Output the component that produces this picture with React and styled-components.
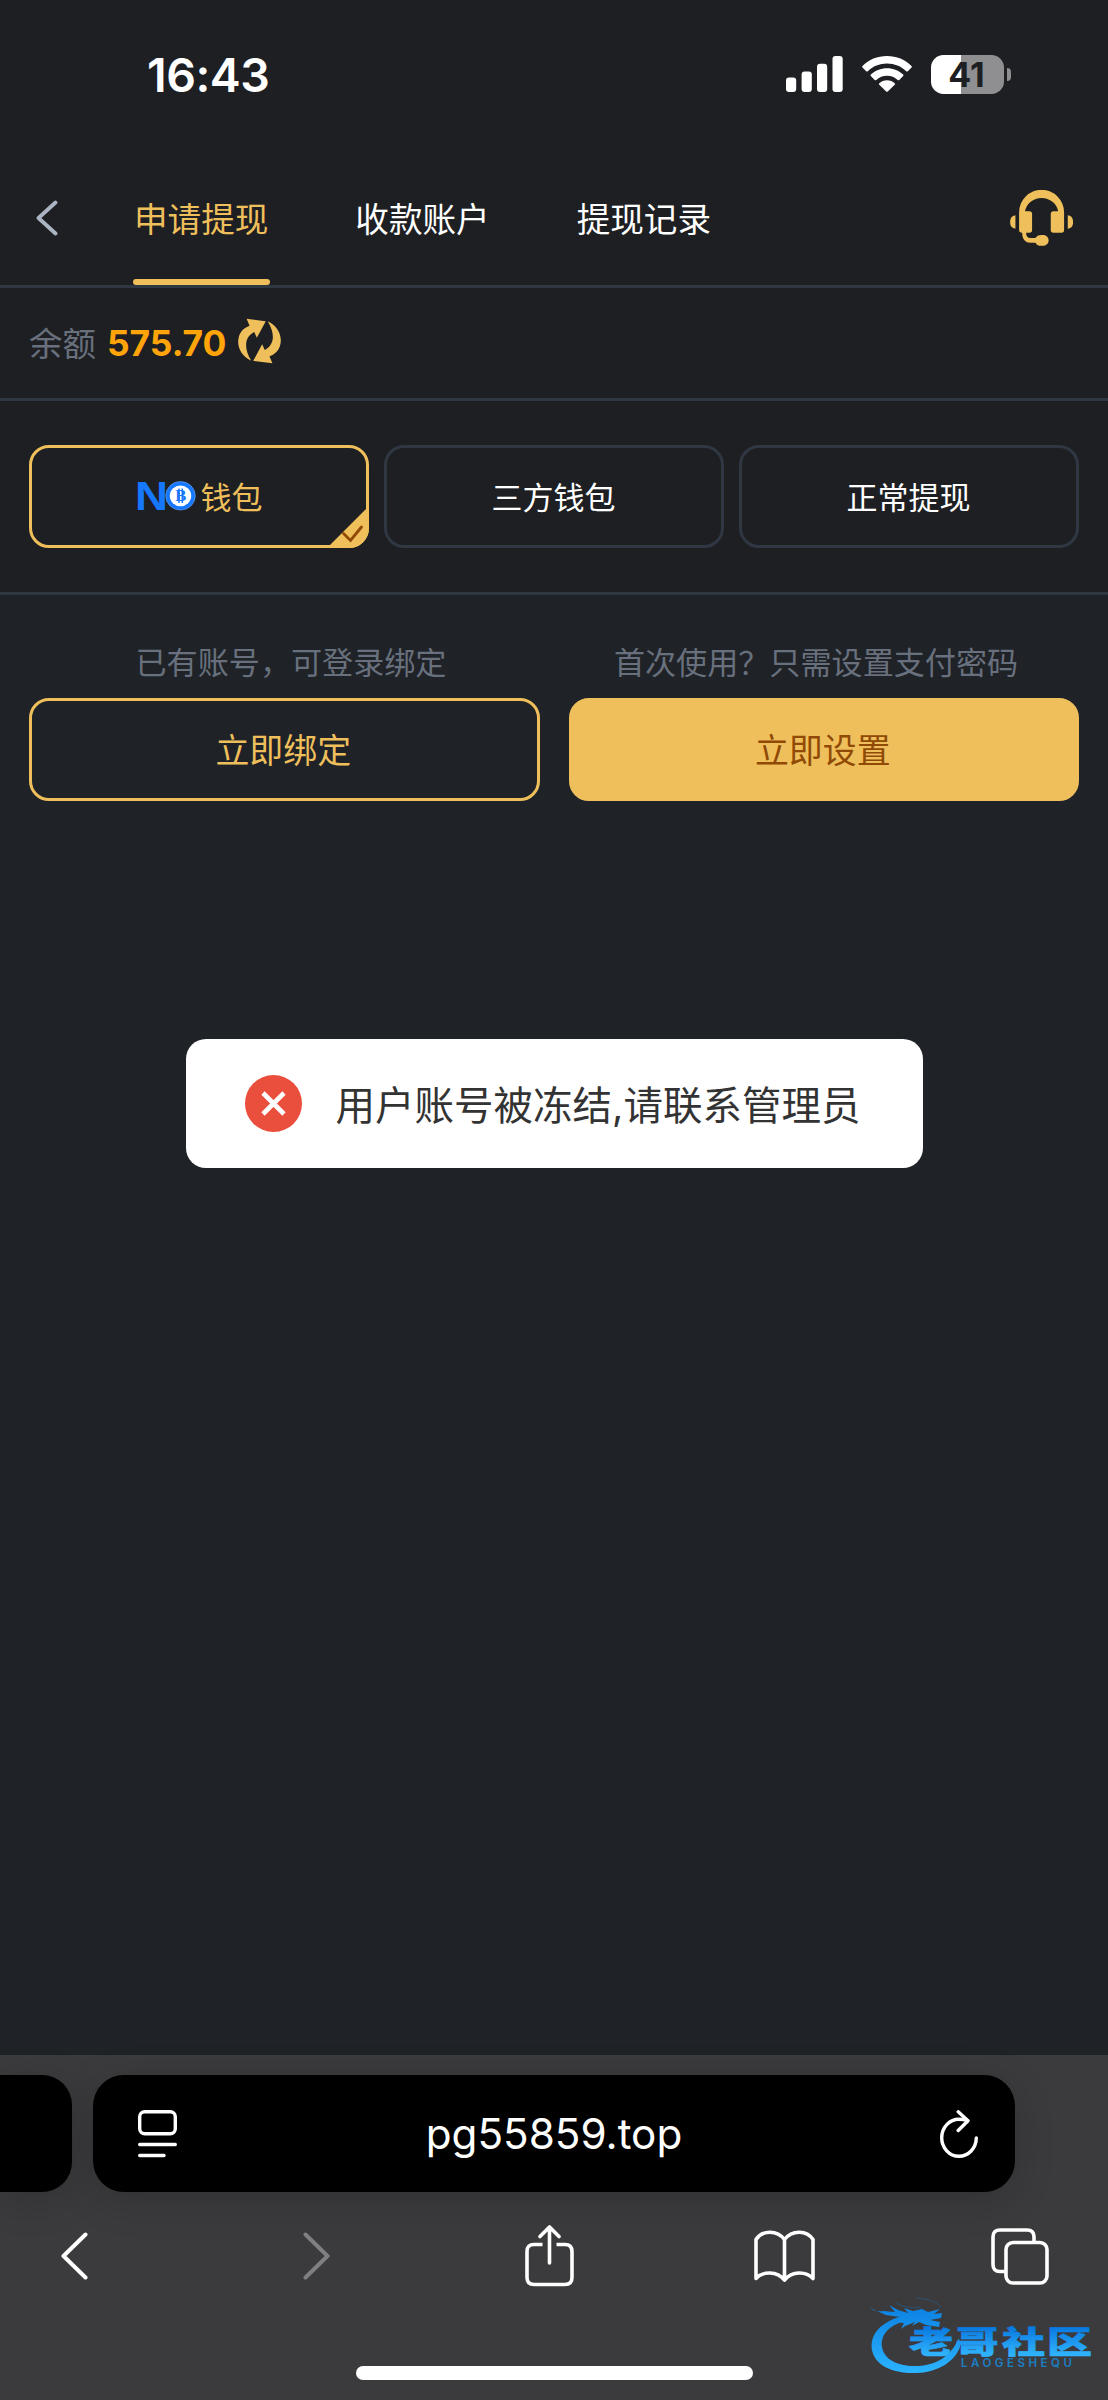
import React from 'react'
import styled, { createGlobalStyle } from 'styled-components'

const tabs = ['申请提现', '收款账户', '提现记录'];

function SignalIcon() {
  return (
    <svg width="57" height="36" viewBox="0 0 57 36" fill="#fff">
      <rect x="0" y="21.5" width="10.2" height="14.5" rx="3" />
      <rect x="15.6" y="15.5" width="10.2" height="20.5" rx="3" />
      <rect x="31" y="7.7" width="10.2" height="28.3" rx="3" />
      <rect x="46.5" y="0" width="10.2" height="36" rx="3" />
    </svg>
  )
}

function WifiIcon() {
  return (
    <svg width="50" height="36" viewBox="0 0 50 36" fill="#fff">
      <path d="M25 0C34.6 0 43.3 3.7 49.5 9.9Q50.2 10.7 49.5 11.5L45.8 15.2Q45 15.9 44.2 15.2C39.2 10.4 32.4 7.6 25 7.6S10.8 10.4 5.8 15.2Q5 15.9 4.2 15.2L.5 11.5Q-.2 10.7 .5 9.9C6.7 3.7 15.4 0 25 0Z" />
      <path d="M25 12.2C31.3 12.2 37 14.6 41.2 18.5Q41.9 19.3 41.2 20.1L37.3 23.9Q36.5 24.6 35.7 23.9C32.9 21.3 29.1 19.7 25 19.7S17.1 21.3 14.3 23.9Q13.5 24.6 12.7 23.9L8.8 20.1Q8.1 19.3 8.8 18.5C13 14.6 18.7 12.2 25 12.2Z" />
      <path d="M25 24.3C28 24.3 30.7 25.4 32.7 27.2Q33.5 28 32.7 28.8L25.8 35.5Q25 36.2 24.2 35.5L17.3 28.8Q16.5 28 17.3 27.2C19.3 25.4 22 24.3 25 24.3Z" />
    </svg>
  )
}

function HeadsetIcon() {
  return (
    <svg width="63.5" height="56" viewBox="810 480 190 168" fill="#eebf5b">
      <path d="M837 552V547A67.5 67.5 0 0 1 972 547V600Q972 608 964 608H940Q932 608 932 600V552Q932 544 940 544H954A50 47 0 0 0 855 544H868Q876 544 876 552V600Q876 608 868 608H858Q858 624 872 624H886Q892 615 903 615H911A16 16.3 0 0 1 911 647.5H903Q892 647.5 886 638H872Q846 638 846 608Q837 608 837 600Z" />
      <path d="M826 556V596Q810 594 810 576T826 556Z" />
      <path d="M983 556V596Q999 594 999 576T983 556Z" />
    </svg>
  )
}

function RefreshIcon() {
  const arrow = 'M93 181C59 165 48 132 56 107C61 92 70 82 88 75L79 54L137 61L110 111L102 94C78 106 66 135 93 181Z';
  return (
    <svg width="43" height="46" viewBox="53 52 130 138" fill="#eebf5b">
      <path d={arrow} />
      <path transform="rotate(180 118 121)" d={arrow} />
    </svg>
  )
}

function NoLogo() {
  return (
    <svg width="62" height="52" viewBox="0 -10 62 52">
      <text x="0" y="29.8" fontFamily="Liberation Sans" fontWeight="700" fontSize="40" fill="#1677ff" textLength="33" lengthAdjust="spacingAndGlyphs">N</text>
      <ellipse cx="45.5" cy="15.8" rx="14.8" ry="14.3" fill="#1677ff" stroke="#6ea8ef" strokeWidth=".6" />
      <ellipse cx="45.5" cy="15.8" rx="10.7" ry="10.4" fill="#fff" />
      <path d="M44 8.5V23M47.3 8.5V23" stroke="#1677ff" strokeWidth="1.5" />
      <text x="45.8" y="21.3" textAnchor="middle" fontFamily="Liberation Serif" fontWeight="700" fontSize="16.5" fill="#1677ff">B</text>
    </svg>
  )
}

function ShareIcon() {
  return (
    <svg width="49" height="62" viewBox="0 0 49 62" fill="none" stroke="#fff" strokeWidth="3.6">
      <path d="M17.5 19.5H9Q2 19.5 2 26.5V52.5Q2 59.5 9 59.5H40Q47 59.5 47 52.5V26.5Q47 19.5 40 19.5H31.5" />
      <path d="M24.5 38V3M15 11.5L24.5 2L34 11.5" strokeLinecap="round" strokeLinejoin="round" />
    </svg>
  )
}

function BookIcon() {
  return (
    <svg width="61" height="52" viewBox="0 0 61 52" fill="none" stroke="#fff" strokeWidth="3.6" strokeLinecap="round" strokeLinejoin="round">
      <path d="M30.5 9.5C23 -.5 8 0 2 9.5V48.5C9 41 23 41 30.5 50C38 41 52 41 59 48.5V9.5C53 0 38 -.5 30.5 9.5ZM30.5 9.5V49" />
    </svg>
  )
}

function TabsIcon() {
  return (
    <svg width="58" height="57" viewBox="0 0 58 57" fill="none" stroke="#fff" strokeWidth="3.6">
      <path d="M14 43.5H9Q2 43.5 2 36.5V9Q2 2 9 2H36Q43 2 43 9V13.5" />
      <rect x="15" y="14.5" width="41" height="40.5" rx="7" />
    </svg>
  )
}

function Watermark() {
  return (
    <svg width="226" height="82" viewBox="0 0 226 82">
      <defs>
        <linearGradient id="ring" gradientUnits="userSpaceOnUse" x1="0" y1="8" x2="0" y2="80">
          <stop offset="0" stopColor="#0a7ee0" />
          <stop offset="1" stopColor="#2bb4ff" />
        </linearGradient>
        <linearGradient id="word" gradientUnits="userSpaceOnUse" x1="0" y1="33" x2="0" y2="60">
          <stop offset="0" stopColor="#0878e0" />
          <stop offset="1" stopColor="#2fb2fb" />
        </linearGradient>
      </defs>
      <g fill="url(#ring)">
        <path d="M29 23C8 30 0 42 2 56C5 72 24 80 47 79C69 78 85 67 90 53L89 44C81 62 67 71 48 72C29 73 14 66 12 53C10 40 21 29 40 26Z" />
        <path d="M0 14Q5 18 13 17L25 18L19 11L28 16L38 19L34 14L43 17L52 15L58 18L70 15L64 20L72 19L71 24L60 26L70 28L69 33L56 31L49 28L42 32L45 28L35 32L31 35L34 29L24 28L30 23L16 21Z" />
      </g>
      <path d="M26 9Q36 15 51 13M46 4Q65 5 72 14" fill="none" stroke="#29557a" strokeWidth=".8" />
      <g fontFamily="Noto Sans CJK SC" fontWeight="900" fontSize="31" fill="url(#word)" stroke="url(#word)" strokeWidth=".7">
        <text x="39" y="59" textLength="44" lengthAdjust="spacingAndGlyphs">老</text>
        <text x="85.5" y="59" textLength="43" lengthAdjust="spacingAndGlyphs">哥</text>
        <text x="132" y="59" textLength="43" lengthAdjust="spacingAndGlyphs">社</text>
        <text x="177" y="59" textLength="45" lengthAdjust="spacingAndGlyphs">区</text>
      </g>
      <text x="91" y="73" fontFamily="Inter" fontWeight="600" fontSize="11.5" fill="#1b7fc4" textLength="111">LAOGESHEQU</text>
    </svg>
  )
}

function App() {
  return (
    <Container>
      <GlobalStyle />
      <StatusBar>
        <Clock>16:43</Clock>
        <StatusIcons>
          <SignalIcon />
          <WifiIcon />
          <Battery><BatteryBody>41</BatteryBody><BatteryTip /></Battery>
        </StatusIcons>
      </StatusBar>

      <Header>
        <svg width="22" height="36" viewBox="0 0 22 36" fill="none" stroke="#abb4c3" strokeWidth="3.8" strokeLinecap="round" strokeLinejoin="round">
          <path d="M19.5 2.5L2.5 18L19.5 33.5" />
        </svg>
        <TabList>
          {tabs.map((tab, i) => <Tab key={tab} $active={i === 0}>{tab}</Tab>)}
        </TabList>
        <HeadsetIcon />
      </Header>

      <BalanceRow>
        <BalanceLabel>余额</BalanceLabel>
        <Balance>575.70</Balance>
        <RefreshIcon />
      </BalanceRow>

      <WalletRow>
        <Wallet $active>
          <NoLogo />钱包
          <Corner>
            <svg width="42" height="42" viewBox="0 0 42 42">
              <path d="M42 0V22A20 20 0 0 1 22 42H0Z" fill="#eebf5b" />
              <path d="M16.5 27.5L23.5 34.5L34.5 21" fill="none" stroke="#904a06" strokeWidth="2.8" strokeLinecap="round" />
            </svg>
          </Corner>
        </Wallet>
        <Wallet>三方钱包</Wallet>
        <Wallet>正常提现</Wallet>
      </WalletRow>

      <Main>
        <HintRow>
          <Hint>已有账号，可登录绑定</Hint>
          <Hint>首次使用？只需设置支付密码</Hint>
        </HintRow>
        <ButtonRow>
          <Button>立即绑定</Button>
          <Button $filled>立即设置</Button>
        </ButtonRow>
        <Toast>
          <svg width="57" height="57" viewBox="0 0 57 57">
            <circle cx="28.5" cy="28.5" r="28.5" fill="#ea4f3d" />
            <path d="M18 18L39 39M39 18L18 39" stroke="#fff" strokeWidth="4.6" />
          </svg>
          <ToastText>用户账号被冻结,请联系管理员</ToastText>
        </Toast>
      </Main>

      <Browser>
        <AddressRow>
          <PrevPage />
          <AddressBar>
            <svg width="39" height="48" viewBox="0 0 39 48" fill="none" stroke="#fff" strokeWidth="3.4" strokeLinecap="round">
              <rect x="1.7" y="1.7" width="35.6" height="22" rx="5" />
              <path d="M1.7 34.5H37.3M1.7 45.5H26" />
            </svg>
            <Url>pg55859.top</Url>
            <svg width="38" height="48" viewBox="0 0 38 48" fill="none" stroke="#fff" strokeWidth="3.4" strokeLinecap="round" strokeLinejoin="round">
              <path d="M27 10.4Q23 9.3 19 9.3A17.3 18.5 0 1 0 36.3 28" />
              <path d="M18.2 1.8L28 10.7L18.2 20.5" />
            </svg>
          </AddressBar>
        </AddressRow>
        <ToolBar>
          <svg width="27" height="48" viewBox="0 0 27 48" fill="none" stroke="#fff" strokeWidth="4" strokeLinecap="round" strokeLinejoin="round">
            <path d="M24.5 2.5L2.5 24L24.5 45.5" />
          </svg>
          <svg width="27" height="48" viewBox="0 0 27 48" fill="none" stroke="#7f7f81" strokeWidth="4" strokeLinecap="round" strokeLinejoin="round">
            <path d="M2.5 2.5L24.5 24L2.5 45.5" />
          </svg>
          <ShareIcon />
          <BookIcon />
          <TabsIcon />
        </ToolBar>
        <HomeBar />
        <WatermarkBox><Watermark /></WatermarkBox>
      </Browser>
    </Container>
  )
}

const GlobalStyle = createGlobalStyle`
  * {
    box-sizing: border-box;
  }
  body {
    margin: 0;
    background-color: #1f2227;
  }
  svg {
    display: block;
    flex-shrink: 0;
  }
`;

const Container = styled.div`
  width: 1108px;
  height: 2400px;
  display: flex;
  flex-direction: column;
  overflow: hidden;
  background-color: #1f2227;
  font-family: "Inter", "Noto Sans CJK SC", sans-serif;
  color: #fff;
`;

const StatusBar = styled.div`
  height: 152px;
  padding: 0 97px 0 147px;
  display: flex;
  align-items: center;
  justify-content: space-between;
  background-color: #1e1f23;
`;

const Clock = styled.div`
  margin-top: -2px;
  font-size: 46.5px;
  font-weight: 600;
  letter-spacing: -0.5px;
  line-height: 56px;
`;

const StatusIcons = styled.div`
  display: flex;
  align-items: center;
  gap: 19px;
  margin-top: -4px;
`;

const Battery = styled.div`
  display: flex;
  align-items: center;
  gap: 3px;
`;

const BatteryBody = styled.div`
  width: 73px;
  height: 39px;
  padding-right: 2px;
  border-radius: 12.5px;
  background: linear-gradient(90deg, #fff 30px, #8f8f91 30px);
  color: #1e1f23;
  font-size: 34px;
  font-weight: 700;
  line-height: 39px;
  text-align: center;
`;

const BatteryTip = styled.div`
  width: 4px;
  height: 13px;
  border-radius: 0 4px 4px 0;
  background-color: #8f8f91;
`;

const Header = styled.div`
  height: 136px;
  padding: 0 35px 0 36px;
  display: flex;
  align-items: center;
  background-color: #1e1f23;
  border-bottom: 3px solid #2f3742;

  > svg {
    margin-top: -1px;
  }
`;

const TabList = styled.div`
  flex: 1;
  align-self: stretch;
  display: flex;
  gap: 84px;
  padding-left: 75px;
`;

const Tab = styled.div`
  display: flex;
  align-items: center;
  padding: 0 2px 3px 1px;
  font-size: 33.6px;
  position: relative;
  color: ${(props) => (props.$active ? '#eebf5b' : '#fff')};

  &::after {
    content: '';
    display: ${(props) => (props.$active ? 'block' : 'none')};
    position: absolute;
    left: 0;
    right: 0;
    bottom: 0;
    height: 6px;
    border-radius: 3px;
    background-color: #eebf5b;
  }
`;

const BalanceRow = styled.div`
  height: 113px;
  padding: 0 29px;
  display: flex;
  align-items: center;
  background-color: #1e1f23;
  border-bottom: 3px solid #2f3742;

  svg {
    margin: -5px 0 0 12px;
  }
`;

const BalanceLabel = styled.span`
  margin-top: -4px;
  font-size: 33.5px;
  color: #68707d;
`;

const Balance = styled.span`
  margin-left: 11px;
  font-size: 35.4px;
  font-weight: 700;
  color: #ffa50a;
`;

const WalletRow = styled.div`
  height: 194px;
  padding: 0 29px;
  display: flex;
  align-items: center;
  gap: 15px;
  background-color: #1e1f23;
  border-bottom: 3px solid #2f3742;
`;

const Wallet = styled.div`
  position: relative;
  flex: 1;
  height: 103px;
  padding: 0 1px 3px 0;
  display: flex;
  align-items: center;
  justify-content: center;
  gap: 4px;
  border: 3px solid ${(props) => (props.$active ? '#eebf5b' : '#2f3742')};
  border-radius: 20px;
  color: ${(props) => (props.$active ? '#eebf5b' : '#fff')};
  font-size: 31px;

  > svg {
    margin-top: 1px;
  }
`;

const Corner = styled.span`
  position: absolute;
  right: -3px;
  bottom: -3px;
`;

const Main = styled.div`
  height: 1460px;
  padding: 43px 29px 0;
`;

const HintRow = styled.div`
  display: flex;
`;

const Hint = styled.div`
  flex: 1;
  height: 60px;
  padding-right: 1px;
  line-height: 50px;
  font-size: 31.1px;
  color: #68707d;
  text-align: center;
`;

const ButtonRow = styled.div`
  display: flex;
  gap: 29px;
`;

const Button = styled.button`
  flex: 1;
  height: 103px;
  padding: 0 2px 3px 0;
  border: 3px solid #eebf5b;
  border-radius: 20px;
  background-color: ${(props) => (props.$filled ? '#eebf5b' : 'transparent')};
  color: ${(props) => (props.$filled ? '#904a06' : '#eebf5b')};
  font-family: inherit;
  font-size: 33.9px;
`;

const Toast = styled.div`
  width: 737px;
  height: 129px;
  margin: 238px auto 0;
  padding-left: 59px;
  display: flex;
  align-items: center;
  background-color: #fff;
  border-radius: 20px;
`;

const ToastText = styled.p`
  margin: -2px 0 0 34px;
  font-size: 39.5px;
  color: #333;
  white-space: nowrap;
`;

const Browser = styled.div`
  position: relative;
  height: 345px;
  padding-top: 20px;
  background-color: #3b3b3d;
`;

const AddressRow = styled.div`
  display: flex;
  gap: 21px;
`;

const PrevPage = styled.div`
  width: 72px;
  height: 117px;
  background-color: #000;
  border-radius: 0 30px 30px 0;
  box-shadow: 0 8px 40px rgba(0, 0, 0, 0.16);
`;

const AddressBar = styled.div`
  width: 922px;
  height: 117px;
  padding: 0 37px 0 45px;
  display: flex;
  align-items: center;
  background-color: #000;
  border-radius: 31px;
  box-shadow: 0 8px 40px rgba(0, 0, 0, 0.16);
`;

const Url = styled.div`
  flex: 1;
  padding-right: 9px;
  font-size: 42.2px;
  text-align: center;
`;

const ToolBar = styled.div`
  height: 128px;
  padding-left: 61px;
  display: grid;
  grid-template-columns: 242px 222px 229px 237px auto;
  align-items: center;
`;

const HomeBar = styled.div`
  width: 397px;
  height: 14px;
  margin: 46px auto 0;
  border-radius: 7px;
  background-color: #fff;
`;

const WatermarkBox = styled.div`
  position: absolute;
  left: 870px;
  top: 239px;
`;

export default App
